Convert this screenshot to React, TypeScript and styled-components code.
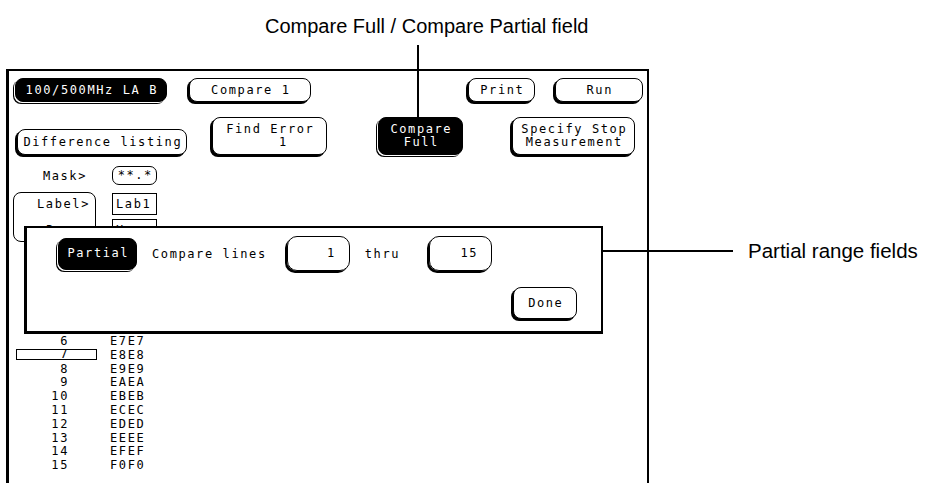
import styled, { createGlobalStyle } from "styled-components"

const GlobalStyle = createGlobalStyle`
	html, body {
		margin: 0;
		padding: 0;
		background: #fff;
	}
	body {
		width: 932px;
		height: 483px;
		overflow: hidden;
	}
`

const Figure = styled.div`
	position: relative;
	width: 932px;
	height: 483px;
	overflow: hidden;
	background: #fff;
	color: #000;
`

const Caption = styled.div`
	box-sizing: border-box;
	height: 69px;
	padding: 14px 0 0 265px;
	font-family: "Liberation Sans", Arial, sans-serif;
	font-size: 20px;
	line-height: 24px;
`

const SideNote = styled.div`
	position: absolute;
	left: 748px;
	top: 239px;
	font-family: "Liberation Sans", Arial, sans-serif;
	font-size: 20.5px;
	line-height: 24px;
	white-space: nowrap;
`

const Leader = styled.div<{ $vertical?: boolean }>`
	position: absolute;
	background: #000;
	${(p) =>
		p.$vertical
			? "left: 417px; top: 45px; width: 2px; height: 72px;"
			: "left: 492px; top: 250px; width: 241px; height: 2px;"}
`

const Screen = styled.div`
	position: relative;
	box-sizing: border-box;
	margin-left: 6px;
	width: 643px;
	height: 414px;
	border: solid #000;
	border-width: 2px 2px 0 3px;
	font-family: "DejaVu Sans Mono", monospace;
	font-size: 12px;
	letter-spacing: 1.6px;
`

const TopRow = styled.div`
	display: flex;
	align-items: flex-start;
	padding: 7px 4px 0 6px;
`

const SecondRow = styled.div`
	display: flex;
	align-items: flex-end;
	padding: 15px 0 0 8px;
`

const Key = styled.div<{ $w: number; $h: number; $dark?: boolean; $ml?: number }>`
	box-sizing: border-box;
	flex: none;
	width: ${(p) => p.$w}px;
	height: ${(p) => p.$h}px;
	margin-left: ${(p) => p.$ml ?? 0}px;
	display: flex;
	flex-direction: column;
	align-items: center;
	justify-content: center;
	padding-left: 1.6px;
	border: 1px solid #000;
	border-radius: 8px;
	background: ${(p) => (p.$dark ? "#000" : "#fff")};
	color: ${(p) => (p.$dark ? "#fff" : "#000")};
	box-shadow: ${(p) =>
		p.$dark ? "-1px 1px 0 #fff, -2px 2px 0 #000" : "-2px 2px 0 #000"};
	line-height: 13px;
	white-space: pre;
`

const Setup = styled.div`
	display: grid;
	grid-template-columns: 87px 45px;
	column-gap: 12px;
	row-gap: 7px;
	padding: 11px 0 0 4px;
`

const MaskLabel = styled.div`
	align-self: center;
	padding-right: 13px;
	text-align: right;
	line-height: 14px;
`

const MaskField = styled.div`
	box-sizing: border-box;
	height: 19px;
	border: 1px solid #000;
	border-radius: 7px;
	text-align: center;
	padding-left: 1.6px;
	line-height: 17px;
`

const LabelBox = styled.div`
	box-sizing: border-box;
	width: 83px;
	height: 50px;
	display: grid;
	grid-template-rows: 22px 22px;
	row-gap: 4px;
	padding: 0 5px 0 0;
	border: 1px solid #000;
	border-radius: 8px;
	text-align: right;
	line-height: 22px;
`

const FieldStack = styled.div`
	display: grid;
	grid-template-rows: 22px 22px;
	row-gap: 4px;
	padding-top: 1px;
`

const SquareField = styled.div`
	box-sizing: border-box;
	border: 1px solid #000;
	padding-left: 3px;
	line-height: 20px;
`

const Listing = styled.div`
	margin-top: 93px;
`

const ListRow = styled.div`
	display: flex;
	align-items: flex-start;
	height: 13.8px;
	line-height: 13.8px;
`

const LineNo = styled.div<{ $marked?: boolean }>`
	box-sizing: border-box;
	flex: none;
	width: 81px;
	margin-left: 7px;
	padding-right: 27px;
	text-align: right;
	border: 1px solid ${(p) => (p.$marked ? "#000" : "transparent")};
	${(p) =>
		p.$marked
			? "height: 11px; line-height: 9px; margin-top: 0.5px;"
			: "border-width: 0 1px;"}
`

const HexValue = styled.div`
	margin-left: 13px;
`

const Popup = styled.div`
	position: absolute;
	left: 15px;
	top: 155px;
	box-sizing: border-box;
	width: 579px;
	height: 108px;
	display: flex;
	flex-direction: column;
	border: solid #000;
	border-width: 2px 2px 3px 3px;
	background: #fff;
`

const PopupRow = styled.div`
	display: flex;
	align-items: center;
	height: 35px;
	margin-top: 8px;
`

const PlainText = styled.span<{ $ml: number }>`
	margin-left: ${(p) => p.$ml}px;
	white-space: pre;
`

const RangeField = styled.div<{ $ml: number }>`
	box-sizing: border-box;
	flex: none;
	width: 63px;
	height: 35px;
	margin-left: ${(p) => p.$ml}px;
	padding-right: 13px;
	border: 1px solid #000;
	border-radius: 10px;
	box-shadow: -2px 2px 0 #000;
	text-align: right;
	line-height: 33px;
`

const DoneRow = styled.div`
	display: flex;
	justify-content: flex-end;
	padding: 16px 24px 0 0;
`

const rows = [
	["6", "E7E7"],
	["7", "E8E8"],
	["8", "E9E9"],
	["9", "EAEA"],
	["10", "EBEB"],
	["11", "ECEC"],
	["12", "EDED"],
	["13", "EEEE"],
	["14", "EFEF"],
	["15", "F0F0"]
]

export default function App() {
	return (
		<Figure>
			<GlobalStyle />
			<Caption>Compare Full / Compare Partial field</Caption>
			<Leader $vertical />
			<Leader />
			<SideNote>Partial range fields</SideNote>

			<Screen>
				<TopRow>
					<Key $w={152} $h={24} $dark>
						100/500MHz LA B
					</Key>
					<Key $w={122} $h={24} $ml={22}>
						Compare 1
					</Key>
					<Key $w={67} $h={24} $ml={157}>
						Print
					</Key>
					<Key $w={88} $h={24} $ml={20}>
						Run
					</Key>
				</TopRow>

				<SecondRow>
					<Key $w={170} $h={26}>
						Difference listing
					</Key>
					<Key $w={115} $h={38} $ml={25}>
						<span>Find Error</span>
						<span>{"      1   "}</span>
					</Key>
					<Key $w={85} $h={38} $ml={51} $dark>
						<span>Compare</span>
						<span>Full</span>
					</Key>
					<Key $w={123} $h={38} $ml={49}>
						<span>Specify Stop</span>
						<span>Measurement</span>
					</Key>
				</SecondRow>

				<Setup>
					<MaskLabel>Mask&gt;</MaskLabel>
					<MaskField>**.*</MaskField>
					<LabelBox>
						<span>Label&gt;</span>
						<span>Base&gt;</span>
					</LabelBox>
					<FieldStack>
						<SquareField>Lab1</SquareField>
						<SquareField>Hex</SquareField>
					</FieldStack>
				</Setup>

				<Listing>
					{rows.map(([n, v]) => (
						<ListRow key={n}>
							<LineNo $marked={n === "7"}>{n}</LineNo>
							<HexValue>{v}</HexValue>
						</ListRow>
					))}
				</Listing>

				<Popup>
					<PopupRow>
						<Key $w={79} $h={32} $ml={31} $dark>
							Partial
						</Key>
						<PlainText $ml={15}>Compare lines</PlainText>
						<RangeField $ml={20}>1</RangeField>
						<PlainText $ml={15}>thru</PlainText>
						<RangeField $ml={29}>15</RangeField>
					</PopupRow>
					<DoneRow>
						<Key $w={64} $h={32}>
							Done
						</Key>
					</DoneRow>
				</Popup>
			</Screen>
		</Figure>
	)
}
